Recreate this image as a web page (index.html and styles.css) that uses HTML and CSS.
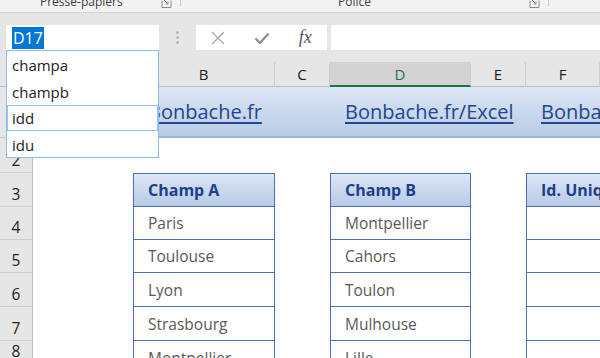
FILE: index.html
```html
<!DOCTYPE html>
<html lang="fr">
<head>
<meta charset="utf-8">
<title>Excel - noms</title>
<link rel="stylesheet" href="styles.css">
</head>
<body>
<div class="ribbon">
  <div class="group g1">
    <span class="glabel">Presse-papiers</span>
    <svg class="launch" viewBox="0 0 11 8"><path d="M1 0.5V7.5H10V0.5" fill="none" stroke="#8a8a8a" stroke-width="1"/><path d="M3 0L7 4M7 1.5V4H4.5" fill="none" stroke="#8a8a8a" stroke-width="1"/></svg>
    <span class="sep"></span>
  </div>
  <div class="group g2">
    <span class="glabel">Police</span>
    <svg class="launch" viewBox="0 0 11 8"><path d="M1 0.5V7.5H10V0.5" fill="none" stroke="#8a8a8a" stroke-width="1"/><path d="M3 0L7 4M7 1.5V4H4.5" fill="none" stroke="#8a8a8a" stroke-width="1"/></svg>
    <span class="sep"></span>
  </div>
</div>

<div class="fbar">
  <div class="namebox"><span class="sel">D17</span></div>
  <div class="dots"><svg viewBox="0 0 3 13" width="3" height="13"><circle cx="1.5" cy="1.5" r="1.2" fill="#a6a6a6"/><circle cx="1.5" cy="6.5" r="1.2" fill="#a6a6a6"/><circle cx="1.5" cy="11.5" r="1.2" fill="#a6a6a6"/></svg></div>
  <div class="fbtns">
    <span class="fbtn"><svg viewBox="0 0 14 14" width="14" height="14"><path d="M1 1L13 13M13 1L1 13" stroke="#a8a8a8" stroke-width="1.3" fill="none"/></svg></span>
    <span class="fbtn"><svg viewBox="0 0 16 14" width="16" height="14"><path d="M1.5 7.5L6 12L14.5 2.5" stroke="#8c8c8c" stroke-width="2.2" fill="none"/></svg></span>
    <span class="fbtn fx">fx</span>
  </div>
  <div class="finput"></div>
</div>

<div class="sheet">
  <div class="corner"></div>
  <div class="ch">A</div>
  <div class="ch">B</div>
  <div class="ch">C</div>
  <div class="ch active">D</div>
  <div class="ch">E</div>
  <div class="ch">F</div>

  <div class="rh">1</div>
  <div class="band">
    <a class="link lb">Bonbache.fr</a>
    <a class="link ld">Bonbache.fr/Excel</a>
    <a class="link lf">Bonbache.fr</a>
  </div>

  <div class="rh">2</div>
  <div class="rh">3</div>
  <div class="rh">4</div>
  <div class="rh">5</div>
  <div class="rh">6</div>
  <div class="rh">7</div>
  <div class="rh">8</div>

  <div class="tbl tb">
    <div class="th">Champ A</div>
    <div class="td">Paris</div>
    <div class="td">Toulouse</div>
    <div class="td">Lyon</div>
    <div class="td">Strasbourg</div>
    <div class="td">Montpellier</div>
  </div>
  <div class="tbl tdd">
    <div class="th">Champ B</div>
    <div class="td">Montpellier</div>
    <div class="td">Cahors</div>
    <div class="td">Toulon</div>
    <div class="td">Mulhouse</div>
    <div class="td">Lille</div>
  </div>
  <div class="tbl tf">
    <div class="th">Id. Unique</div>
    <div class="td"></div>
    <div class="td"></div>
    <div class="td"></div>
    <div class="td"></div>
    <div class="td"></div>
  </div>
</div>

<div class="dropdown">
  <div class="item">champa</div>
  <div class="item">champb</div>
  <div class="item hover">idd</div>
  <div class="item">idu</div>
</div>
</body>
</html>
```

FILE: styles.css
```css
html, body {
  margin: 0;
  padding: 0;
}
body {
  width: 600px;
  height: 358px;
  overflow: hidden;
  background: #ffffff;
  font-family: "Open Sans", "Noto Sans", sans-serif;
  position: relative;
}

/* Ribbon strip */
.ribbon {
  height: 12px;
  background: #f3f3f3;
  border-bottom: 1px solid #d4d4d4;
  display: flex;
  overflow: hidden;
}
.group {
  display: flex;
  align-items: flex-start;
  flex: none;
}
.g1 { width: 181px; }
.g2 { width: 368px; }
.glabel {
  font-size: 12px;
  line-height: 12px;
  margin-top: -4px;
  color: #3c3c3c;
  white-space: nowrap;
}
.g1 .glabel { margin-left: 40px; }
.g2 .glabel { margin-left: 157px; }
.launch {
  margin-left: auto;
  width: 11px;
  height: 8px;
  flex: none;
}
.sep {
  width: 1px;
  height: 6px;
  background: #c6c6c6;
  margin-left: 8px;
  flex: none;
}

/* Formula bar */
.fbar {
  height: 49px;
  box-sizing: border-box;
  padding-top: 12px;
  background: #e6e6e6;
  display: flex;
  align-items: flex-start;
}
.namebox {
  margin-left: 6px;
  width: 153px;
  height: 25px;
  box-sizing: border-box;
  background: #ffffff;
  display: flex;
  align-items: center;
  padding-left: 6px;
  flex: none;
}
.sel {
  background: #0078d7;
  color: #ffffff;
  font-size: 16px;
  line-height: 22px;
  padding: 0 1px;
}
.dots {
  width: 37px;
  flex: none;
  display: flex;
  justify-content: center;
  padding-top: 6px;
}
.fbtns {
  width: 131px;
  height: 25px;
  background: #ffffff;
  display: flex;
  flex: none;
}
.fbtn {
  flex: 1;
  display: flex;
  align-items: center;
  justify-content: center;
}
.fx {
  font-family: "Liberation Serif", serif;
  font-style: italic;
  font-size: 18px;
  color: #555555;
  line-height: 25px;
}
.finput {
  flex: 1;
  margin-left: 4px;
  height: 25px;
  background: #ffffff;
}

/* Sheet */
.sheet {
  display: grid;
  grid-template-columns: 33px 100px 142px 55px 141px 55px 1fr;
  grid-template-rows: 25px 51px 35px 34px 33px 33px 34px 34px 1fr;
  height: 296px;
}
.corner {
  background: #e6e6e6;
  border-right: 1px solid #c4c4c4;
  border-bottom: 1px solid #bdbdbd;
}
.ch {
  background: #e6e6e6;
  border-right: 1px solid #cfcfcf;
  border-bottom: 1px solid #bdbdbd;
  display: flex;
  align-items: center;
  justify-content: center;
  font-size: 15px;
  color: #222222;
}
.ch.active {
  background: #d3d3d3;
  color: #217346;
  border-bottom: 2px solid #217346;
}
.rh {
  grid-column: 1;
  background: #e6e6e6;
  border-right: 1px solid #bdbdbd;
  border-bottom: 1px solid #cdcdcd;
  display: flex;
  align-items: flex-end;
  justify-content: center;
  font-size: 15.5px;
  line-height: 20px;
  padding-bottom: 2px;
  color: #222222;
}
.band {
  grid-column: 2 / -1;
  grid-row: 2;
  display: grid;
  grid-template-columns: 100px 142px 55px 141px 55px 1fr;
  align-items: center;
  background: linear-gradient(#dde7f5, #b8cbe7);
  border-bottom: 2px solid #9db6dc;
  overflow: hidden;
}
.link {
  color: #25458f;
  text-decoration: underline;
  text-underline-offset: 3px;
  font-size: 20px;
  white-space: nowrap;
  padding-left: 15px;
}
.lb { grid-column: 2; }
.ld { grid-column: 4; }
.lf { grid-column: 6; }

.tbl {
  grid-row: 4 / -1;
  display: grid;
  grid-template-rows: 34px 33px 33px 34px 34px 34px;
  align-content: start;
  overflow: hidden;
}
.tb { grid-column: 3; }
.tdd { grid-column: 5; }
.tf { grid-column: 7; }
.th, .td {
  border: 1px solid #4b6fb3;
  border-top: none;
  display: flex;
  align-items: center;
  padding-left: 14px;
  white-space: nowrap;
  font-size: 15.5px;
}
.th {
  border-top: 1px solid #4b6fb3;
  background: linear-gradient(#dce6f5, #b7cae7);
  font-weight: 700;
  font-size: 16px;
  color: #1f3f86;
}
.td {
  color: #595959;
}
.tf .th, .tf .td {
  border-right: none;
}

/* Name box drop-down */
.dropdown {
  position: absolute;
  left: 6px;
  top: 50px;
  width: 153px;
  height: 108px;
  box-sizing: border-box;
  border: 1px solid #8fbbe6;
  background: #ffffff;
  font-size: 15px;
  color: #222222;
}
.item {
  height: 27px;
  box-sizing: border-box;
  padding-left: 5px;
  display: flex;
  align-items: center;
}
.item.hover {
  border: 1px solid #96c3ee;
  padding-left: 4px;
  height: 26px;
}
```
